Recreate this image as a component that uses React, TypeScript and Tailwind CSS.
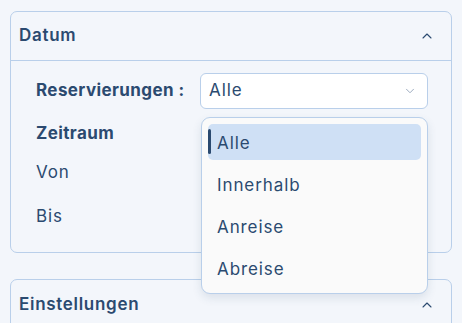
import { ChevronDown, ChevronUp } from "lucide-react";

const options = ["Alle", "Innerhalb", "Anreise", "Abreise"];

function PanelHeader({ title, bordered }: { title: string; bordered?: boolean }) {
  return (
    <div
      className={`flex h-[49px] items-center justify-between pl-[8px] pr-[16px] ${
        bordered ? "border-b border-[#b9cfea]" : ""
      }`}
    >
      <span className="text-[17px] font-semibold tracking-[0.7px] text-[#2b4a70]">{title}</span>
      <ChevronUp size={16} strokeWidth={1.6} className="text-[#2b4a70]" />
    </div>
  );
}

export default function App() {
  return (
    <div
      className="h-[323px] w-[462px] overflow-hidden bg-[#f3f6fb] px-[10px] pt-[11px] text-[#2b4a70]"
      style={{ fontFamily: "Inter, 'Noto Sans', sans-serif" }}
    >
      <section className="rounded-[7px] border border-[#b9cfea]">
        <PanelHeader title="Datum" bordered />
        <div className="pb-[24px] pl-[25px] pr-[23px] pt-[12px]">
          <div className="flex items-center">
            <span className="w-[165px] text-[17px] font-bold tracking-[0.4px]">Reservierungen :</span>
            <div className="relative">
              <div className="flex h-[36px] w-[228px] items-center justify-between rounded-[6px] border border-[#b9cfea] bg-white pl-[8px] pr-[10px]">
                <span className="text-[17px] tracking-[0.9px]">Alle</span>
                <ChevronDown size={14} strokeWidth={1.5} className="text-[#8f9fb6]" />
              </div>
              <div className="absolute left-[1px] top-[44px] z-10 flex w-[227px] flex-col gap-[6px] rounded-[9px] border border-[#b9cfea] bg-[#fafafa] px-[6px] pb-[7px] pt-[6px] shadow-[0_4px_10px_rgba(40,70,110,0.12)]">
                {options.map((option, index) => (
                  <div
                    key={option}
                    className={`relative flex h-[36px] items-center rounded-[5px] pl-[9px] pt-[3px] text-[17px] tracking-[0.9px] ${
                      index === 0 ? "bg-[#cfe0f5]" : ""
                    }`}
                  >
                    {index === 0 && (
                      <span className="absolute left-0 top-[5px] h-[25px] w-[3px] rounded-full bg-[#2b4a70]" />
                    )}
                    {option}
                  </div>
                ))}
              </div>
            </div>
          </div>
          <div className="mt-[12px] text-[17px] font-bold leading-[24px] tracking-[0.4px]">Zeitraum</div>
          <div className="mt-[15px] text-[17px] leading-[24px] tracking-[0.9px]">Von</div>
          <div className="mt-[20px] text-[17px] leading-[24px] tracking-[0.9px]">Bis</div>
        </div>
      </section>
      <section className="mt-[26px] rounded-[7px] border border-[#b9cfea]">
        <PanelHeader title="Einstellungen" />
      </section>
    </div>
  );
}
